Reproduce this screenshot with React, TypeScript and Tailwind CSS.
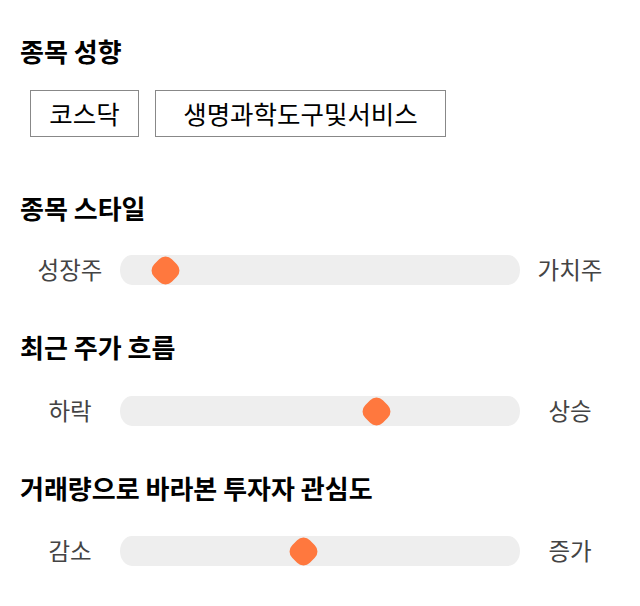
import React from 'react';

interface SliderRowProps {
  left: string;
  right: string;
  thumbX: number; // thumb center, px from track start
}

function SliderRow({ left, right, thumbX }: SliderRowProps) {
  return (
    <div className="flex items-center h-[30px]">
      <div className="w-[100px] text-center text-[23.5px] text-[#444]">{left}</div>
      <div className="relative flex-1 h-[30px] bg-[#eeeeee] rounded-[12px_/_15px]">
        <div
          className="absolute top-1/2 w-[28px] h-[28px] -translate-x-1/2 -translate-y-1/2 flex items-center justify-center"
          style={{ left: thumbX }}
        >
          <div className="w-[25px] h-[25px] rotate-45 rounded-[9px] bg-[#ff783e]" />
        </div>
      </div>
      <div className="w-[100px] text-center text-[23.5px] text-[#444]">{right}</div>
    </div>
  );
}

function Heading({ children }: { children: React.ReactNode }) {
  return <h2 className="text-[26px] leading-[30px] font-bold text-black">{children}</h2>;
}

export default function App() {
  return (
    <div
      className="w-[640px] h-[606px] bg-white px-5 pt-[36px]"
      style={{ fontFamily: '"Noto Sans CJK KR", "Noto Sans", sans-serif' }}
    >
      <Heading>종목 성향</Heading>
      <div className="flex gap-4 ml-[10px] mt-[24px]">
        <div className="w-[109px] h-[47px] flex items-center justify-center border border-[#888] text-[25.5px] text-black">
          코스닥
        </div>
        <div className="w-[291px] h-[47px] flex items-center justify-center border border-[#888] text-[25.5px] text-black">
          생명과학도구및서비스
        </div>
      </div>

      <div className="mt-[56px]">
        <Heading>종목 스타일</Heading>
        <div className="mt-[32px]">
          <SliderRow left="성장주" right="가치주" thumbX={45} />
        </div>
      </div>

      <div className="mt-[47px]">
        <Heading>최근 주가 흐름</Heading>
        <div className="mt-[34px]">
          <SliderRow left="하락" right="상승" thumbX={256} />
        </div>
      </div>

      <div className="mt-[47px]">
        <Heading>거래량으로 바라본 투자자 관심도</Heading>
        <div className="mt-[33px]">
          <SliderRow left="감소" right="증가" thumbX={183} />
        </div>
      </div>
    </div>
  );
}
